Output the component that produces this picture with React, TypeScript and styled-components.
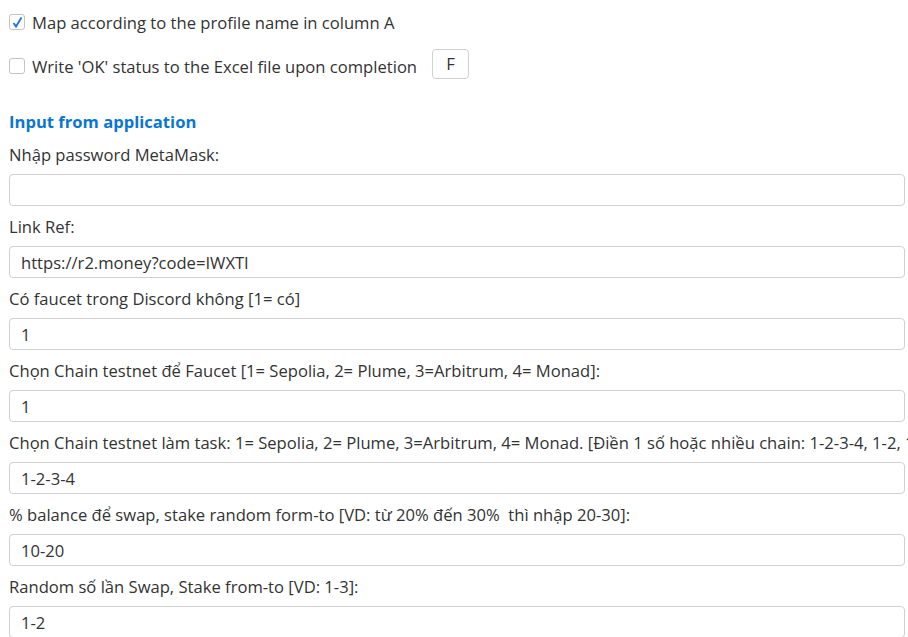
import React from "react";
import styled, { createGlobalStyle } from "styled-components";

const GlobalStyle = createGlobalStyle`
  html, body {
    margin: 0;
    padding: 0;
    background: #ffffff;
    overflow: hidden;
  }
  body {
    font-family: "Open Sans", "Noto Sans", sans-serif;
    font-size: 16.6px;
    color: #333333;
  }
`;

const Page = styled.div`
  width: 896px;
  padding: 10px 0 0 9px;
  display: flex;
  flex-direction: column;
`;

const CheckRow = styled.label<{ $h: number }>`
  display: flex;
  align-items: center;
  gap: 7px;
  height: ${({ $h }) => $h}px;
  white-space: nowrap;
`;

const Box = styled.span`
  width: 16px;
  height: 16px;
  border: 1px solid #c4c4c4;
  border-radius: 3px;
  box-sizing: border-box;
  display: inline-flex;
  align-items: center;
  justify-content: center;
  background: #fff;
  flex: none;
`;

const SmallInput = styled.div`
  width: 37px;
  height: 30px;
  box-sizing: border-box;
  border: 1px solid #d0d0d0;
  border-radius: 4px;
  margin-left: 8px;
  margin-top: -4px;
  display: flex;
  justify-content: center;
  padding-top: 2px;
  color: #333;
`;

const Heading = styled.div`
  margin-top: 22px;
  color: #0b76d2;
  font-weight: 700;
  font-size: 16.6px;
  height: 24px;
  line-height: 24px;
`;

const Field = styled.div`
  display: flex;
  flex-direction: column;
`;

const Label = styled.div`
  white-space: pre;
  height: 40px;
  line-height: 24px;
  padding-top: 9px;
  box-sizing: border-box;
`;

const TextBox = styled.div`
  height: 32px;
  box-sizing: border-box;
  border: 1px solid #d0d0d0;
  border-radius: 4px;
  padding: 0 11px;
  display: flex;
  align-items: center;
  color: #333;
`;

const Check = () => (
  <svg width="13" height="13" viewBox="0 0 13 13">
    <path d="M2.5 7 L5 10.5 L10.5 1.5" fill="none" stroke="#1a74d6" strokeWidth="1.8" />
  </svg>
);

const fields = [
  { label: "Nhập password MetaMask:", value: "" },
  { label: "Link Ref:", value: "https://r2.money?code=IWXTI" },
  { label: "Có faucet trong Discord không [1= có]", value: "1" },
  {
    label: "Chọn Chain testnet để Faucet [1= Sepolia, 2= Plume, 3=Arbitrum, 4= Monad]:",
    value: "1",
  },
  {
    label:
      "Chọn Chain testnet làm task: 1= Sepolia, 2= Plume, 3=Arbitrum, 4= Monad. [Điền 1 số hoặc nhiều chain: 1-2-3-4, 1-2, 1-3]",
    value: "1-2-3-4",
  },
  {
    label: "% balance để swap, stake random form-to [VD: từ 20% đến 30%  thì nhập 20-30]:",
    value: "10-20",
  },
  { label: "Random số lần Swap, Stake from-to [VD: 1-3]:", value: "1-2" },
];

export default function App() {
  return (
    <>
      <GlobalStyle />
      <Page>
        <CheckRow $h={24}>
          <Box>
            <Check />
          </Box>
          Map according to the profile name in column A
        </CheckRow>
        <CheckRow $h={44} style={{ marginTop: 10 }}>
          <Box />
          Write 'OK' status to the Excel file upon completion
          <SmallInput>F</SmallInput>
        </CheckRow>
        <Heading>Input from application</Heading>
        {fields.map((f) => (
          <Field key={f.label}>
            <Label>{f.label}</Label>
            <TextBox>{f.value}</TextBox>
          </Field>
        ))}
      </Page>
    </>
  );
}
